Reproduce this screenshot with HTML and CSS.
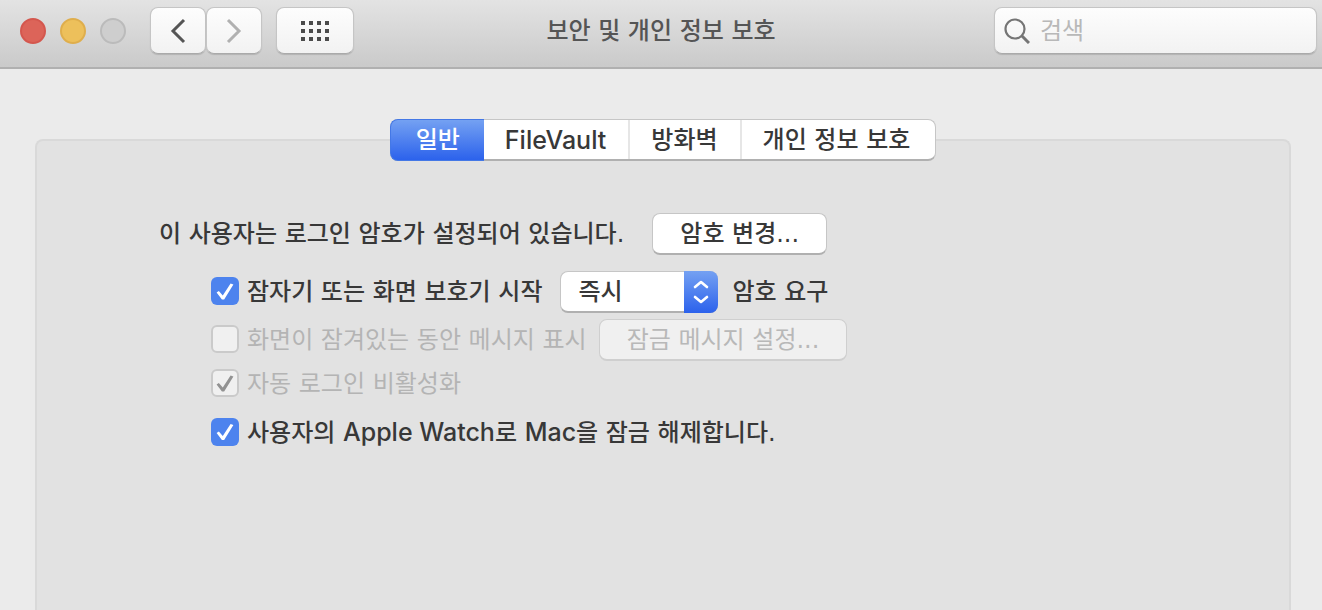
FILE: index.html
```html
<!DOCTYPE html>
<html lang="ko">
<head>
<meta charset="utf-8">
<title>보안 및 개인 정보 보호</title>
<link rel="stylesheet" href="styles.css">
</head>
<body>
<header class="toolbar">
  <div class="toolbar-left">
    <div class="lights">
      <button class="light close" aria-label="닫기"></button>
      <button class="light minimize" aria-label="최소화"></button>
      <button class="light zoom" aria-label="확대" disabled></button>
    </div>
    <nav class="nav">
      <button class="tool" aria-label="뒤로"><svg width="16" height="26" viewBox="0 0 16 26"><path d="M14 2 3 13l11 11" fill="none" stroke="#555" stroke-width="3"/></svg></button>
      <button class="tool" aria-label="앞으로"><svg width="16" height="26" viewBox="0 0 16 26"><path d="M2 2l11 11L2 24" fill="none" stroke="#b0b0b0" stroke-width="3"/></svg></button>
    </nav>
    <button class="tool grid-tool" aria-label="모두 보기"><svg width="30" height="22" viewBox="0 0 30 22" fill="#4b4b4b"><path d="M1 1h4v4H1zM9 1h4v4H9zM17 1h4v4h-4zM25 1h4v4h-4zM1 9h4v4H1zM9 9h4v4H9zM17 9h4v4h-4zM25 9h4v4h-4zM1 17h4v4H1zM9 17h4v4H9zM17 17h4v4h-4zM25 17h4v4h-4z"/></svg></button>
  </div>
  <h1 class="title">보안 및 개인 정보 보호</h1>
  <label class="search">
    <svg width="26" height="26" viewBox="0 0 26 26" fill="none" stroke="#757575"><circle cx="11" cy="11" r="9.5" stroke-width="2.2"/><path d="M18 18l7 7" stroke-width="3"/></svg>
    <input class="search-input" type="search" placeholder="검색" aria-label="검색">
  </label>
</header>
<main class="content">
  <div class="tabs" role="tablist">
    <button class="tab active" role="tab" aria-selected="true">일반</button>
    <button class="tab latin" role="tab" aria-selected="false">FileVault</button>
    <button class="tab" role="tab" aria-selected="false">방화벽</button>
    <button class="tab" role="tab" aria-selected="false">개인 정보 보호</button>
  </div>
  <section class="panel" role="tabpanel">
    <div class="row password-row">
      <span>이 사용자는 로그인 암호가 설정되어 있습니다.</span>
      <button class="button">암호 변경...</button>
    </div>
    <div class="options">
      <div class="row lock-row">
        <input class="check" type="checkbox" id="lock" checked>
        <label for="lock">잠자기 또는 화면 보호기 시작</label>
        <span class="select-box">
          <select class="select" aria-label="암호 요구 시점"><option>즉시</option></select>
          <span class="stepper"><svg width="18" height="26" viewBox="0 0 18 26" fill="none" stroke="#fff" stroke-width="2.6" stroke-linecap="round" stroke-linejoin="round"><path d="M3 8l6-5 6 5M3 18l6 5 6-5"/></svg></span>
        </span>
        <span>암호 요구</span>
      </div>
      <div class="row message-row">
        <input class="check" type="checkbox" id="message" disabled>
        <label for="message">화면이 잠겨있는 동안 메시지 표시</label>
        <button class="button" disabled>잠금 메시지 설정...</button>
      </div>
      <div class="row auto-row">
        <input class="check" type="checkbox" id="auto" checked disabled>
        <label for="auto">자동 로그인 비활성화</label>
      </div>
      <div class="row watch-row">
        <input class="check" type="checkbox" id="watch" checked>
        <label for="watch">사용자의 <span class="latin">Apple Watch</span>로 <span class="latin">Mac</span>을 잠금 해제합니다.</label>
      </div>
    </div>
  </section>
</main>
</body>
</html>
```

FILE: styles.css
```css
* {
  box-sizing: border-box;
}

body {
  margin: 0;
  min-height: 100vh;
  display: flex;
  flex-direction: column;
  background: #ebebeb;
  color: #383838;
  font: 500 24px/40px "DejaVu Sans", "Noto Sans CJK KR", sans-serif;
}

button,
input,
select {
  margin: 0;
  padding: 0;
  border: 0;
  font: inherit;
  color: inherit;
}

svg {
  display: block;
}

.latin {
  font-family: Inter, sans-serif;
  font-size: 25px;
  font-weight: 500;
}

.toolbar {
  display: grid;
  grid-template-columns: 1fr auto 1fr;
  align-items: center;
  padding: 7px 5px 13px;
  background: linear-gradient(#e3e3e3, #cacaca);
  border-bottom: 2px solid #b0b0b0;
}

.toolbar-left,
.lights,
.nav {
  display: flex;
  align-items: center;
}

.lights {
  gap: 14px;
  margin: 0 24px 0 15px;
}

.light {
  width: 26px;
  height: 26px;
  border-radius: 50%;
  border: 2px solid;
}

.close {
  background: #dc6459;
  border-color: #d4574e;
}

.minimize {
  background: #edc05b;
  border-color: #dfae4c;
}

.zoom {
  background: #cecece;
  border-color: #bbb;
}

.nav {
  margin-right: 14px;
}

.tool {
  display: flex;
  align-items: center;
  justify-content: center;
  width: 56px;
  height: 47px;
  border: 1px solid #c5c5c5;
  border-bottom-color: #aaa;
  border-radius: 8px;
  background: linear-gradient(#fdfdfd, #f2f2f2);
  box-shadow: 0 1px 1px #0002;
}

.grid-tool {
  width: 78px;
}

.title {
  margin: 0;
  font-size: 24px;
  font-weight: 500;
  color: #555;
}

.search {
  justify-self: end;
  display: flex;
  align-items: center;
  gap: 10px;
  width: 323px;
  height: 47px;
  padding: 0 9px;
  border: 1px solid #c5c5c5;
  border-bottom-color: #aaa;
  border-radius: 8px;
  background: linear-gradient(#fdfdfd, #f2f2f2);
  box-shadow: 0 1px 1px #0002;
}

.search-input {
  flex: 1;
  min-width: 0;
  height: 40px;
  background: none;
  font-weight: 400;
}

.search-input::placeholder {
  color: #b8b8b8;
}

.content {
  flex: 1;
  display: flex;
  flex-direction: column;
  padding: 50px 31px 0 35px;
}

.tabs {
  position: relative;
  display: flex;
  align-self: center;
  height: 42px;
  margin-bottom: -22px;
  border: 1px solid #c6c6c6;
  border-bottom: 2px solid #b0b0b0;
  border-radius: 8px;
  background: #fff;
}

.tab {
  padding: 0 22px 0 21px;
  background: none;
  border-right: 2px solid #e6e6e6;
  line-height: 38px;
}

.tab:last-child {
  padding: 0 25px 0 21px;
  border-right: 0;
}

.tab.active {
  margin: -1px 0 -2px -1px;
  padding: 0 24px 0 25px;
  border: 1px solid #4478e6;
  border-right: 0;
  border-radius: 8px 0 0 8px;
  background: linear-gradient(#74a1f2, #2c62ec);
  color: #fff;
}

.panel {
  flex: 1;
  padding: 72px 24px 0 122px;
  border: 2px solid #d9d9d9;
  border-bottom: 0;
  border-radius: 8px 8px 0 0;
  background: #e2e2e2;
}

.row {
  display: flex;
  align-items: center;
  white-space: nowrap;
}

.password-row {
  gap: 28px;
}

.options {
  padding: 16px 0 0 52px;
}

.button {
  height: 42px;
  padding: 0 27px;
  border: 1px solid #c6c6c6;
  border-bottom: 2px solid #b0b0b0;
  border-radius: 8px;
  background: #fff;
  line-height: 38px;
}

.button:disabled {
  border-color: #cfcfcf;
  background: #f0f0f0;
  color: #b8b8b8;
  font-weight: 400;
}

.check {
  appearance: none;
  flex: none;
  width: 28px;
  height: 28px;
  margin: 0 8px 2px 0;
  border-radius: 6px;
  background: #4d83ee;
}

.check:disabled {
  border: 2px solid #cacaca;
  background: #f0f0f0;
}

.check:disabled + label {
  color: #b4b4b4;
  font-weight: 400;
}

.check:checked::before {
  content: "";
  display: block;
  width: 28px;
  height: 28px;
  background: #fff;
  clip-path: polygon(20% 55%, 28% 50%, 42% 66%, 70% 23%, 80% 27%, 47% 80%, 39% 80%);
}

.check:checked:disabled::before {
  margin: -2px;
  background: #929292;
}

.select-box {
  display: flex;
  position: relative;
  width: 158px;
  height: 42px;
  margin: 0 14px 0 18px;
}

.select {
  appearance: none;
  width: 100%;
  padding: 0 40px 0 17px;
  border: 1px solid #c6c6c6;
  border-bottom: 2px solid #b0b0b0;
  border-radius: 8px;
  background: #fff;
  line-height: 38px;
}

.stepper {
  position: absolute;
  inset: 0 0 0 auto;
  display: flex;
  align-items: center;
  justify-content: center;
  width: 34px;
  border-radius: 0 8px 8px 0;
  background: linear-gradient(#74a1f2, #2c62ec);
  pointer-events: none;
}

.message-row {
  margin-top: 6px;
}

.message-row .button {
  margin-left: 12px;
}

.auto-row {
  margin-top: 3px;
}

.watch-row {
  margin-top: 8px;
}
```
